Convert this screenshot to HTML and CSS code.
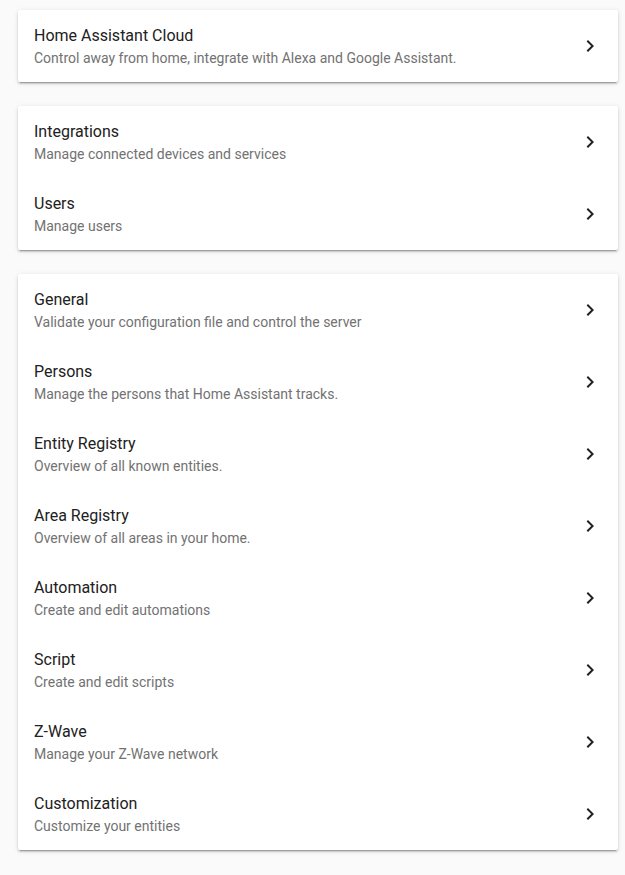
FILE: index.html
```html
<!DOCTYPE html>
<html lang="en">
<head>
<meta charset="utf-8">
<title>Configuration</title>
<link rel="stylesheet" href="styles.css">
</head>
<body>
<main class="page">
  <section class="card">
    <div class="item">
      <div class="body"><div class="title">Home Assistant Cloud</div><div class="sub">Control away from home, integrate with Alexa and Google Assistant.</div></div>
      <svg class="chev" viewBox="0 0 24 24"><path d="M8.59,16.58L13.17,12L8.59,7.41L10,6L16,12L10,18L8.59,16.58Z"/></svg>
    </div>
  </section>
  <section class="card">
    <div class="item">
      <div class="body"><div class="title">Integrations</div><div class="sub">Manage connected devices and services</div></div>
      <svg class="chev" viewBox="0 0 24 24"><path d="M8.59,16.58L13.17,12L8.59,7.41L10,6L16,12L10,18L8.59,16.58Z"/></svg>
    </div>
    <div class="item">
      <div class="body"><div class="title">Users</div><div class="sub">Manage users</div></div>
      <svg class="chev" viewBox="0 0 24 24"><path d="M8.59,16.58L13.17,12L8.59,7.41L10,6L16,12L10,18L8.59,16.58Z"/></svg>
    </div>
  </section>
  <section class="card">
    <div class="item">
      <div class="body"><div class="title">General</div><div class="sub">Validate your configuration file and control the server</div></div>
      <svg class="chev" viewBox="0 0 24 24"><path d="M8.59,16.58L13.17,12L8.59,7.41L10,6L16,12L10,18L8.59,16.58Z"/></svg>
    </div>
    <div class="item">
      <div class="body"><div class="title">Persons</div><div class="sub">Manage the persons that Home Assistant tracks.</div></div>
      <svg class="chev" viewBox="0 0 24 24"><path d="M8.59,16.58L13.17,12L8.59,7.41L10,6L16,12L10,18L8.59,16.58Z"/></svg>
    </div>
    <div class="item">
      <div class="body"><div class="title">Entity Registry</div><div class="sub">Overview of all known entities.</div></div>
      <svg class="chev" viewBox="0 0 24 24"><path d="M8.59,16.58L13.17,12L8.59,7.41L10,6L16,12L10,18L8.59,16.58Z"/></svg>
    </div>
    <div class="item">
      <div class="body"><div class="title">Area Registry</div><div class="sub">Overview of all areas in your home.</div></div>
      <svg class="chev" viewBox="0 0 24 24"><path d="M8.59,16.58L13.17,12L8.59,7.41L10,6L16,12L10,18L8.59,16.58Z"/></svg>
    </div>
    <div class="item">
      <div class="body"><div class="title">Automation</div><div class="sub">Create and edit automations</div></div>
      <svg class="chev" viewBox="0 0 24 24"><path d="M8.59,16.58L13.17,12L8.59,7.41L10,6L16,12L10,18L8.59,16.58Z"/></svg>
    </div>
    <div class="item">
      <div class="body"><div class="title">Script</div><div class="sub">Create and edit scripts</div></div>
      <svg class="chev" viewBox="0 0 24 24"><path d="M8.59,16.58L13.17,12L8.59,7.41L10,6L16,12L10,18L8.59,16.58Z"/></svg>
    </div>
    <div class="item">
      <div class="body"><div class="title">Z-Wave</div><div class="sub">Manage your Z-Wave network</div></div>
      <svg class="chev" viewBox="0 0 24 24"><path d="M8.59,16.58L13.17,12L8.59,7.41L10,6L16,12L10,18L8.59,16.58Z"/></svg>
    </div>
    <div class="item">
      <div class="body"><div class="title">Customization</div><div class="sub">Customize your entities</div></div>
      <svg class="chev" viewBox="0 0 24 24"><path d="M8.59,16.58L13.17,12L8.59,7.41L10,6L16,12L10,18L8.59,16.58Z"/></svg>
    </div>
  </section>
</main>
</body>
</html>
```

FILE: styles.css
```css
html, body {
  margin: 0;
  padding: 0;
  background: #fafafa;
  font-family: Roboto, "Noto Sans", sans-serif;
  -webkit-font-smoothing: antialiased;
}
.page {
  display: flex;
  flex-direction: column;
  gap: 24px;
  padding: 10px 7px 24px 18px;
}
.card {
  width: 600px;
  background: #fff;
  border-radius: 2px;
  box-shadow: 0 2px 2px 0 rgba(0,0,0,.14), 0 1px 5px 0 rgba(0,0,0,.12), 0 3px 1px -2px rgba(0,0,0,.2);
}
.item {
  display: flex;
  align-items: center;
  height: 72px;
  padding: 0 16px;
  box-sizing: border-box;
}
.body {
  flex: 1;
  display: flex;
  flex-direction: column;
}
.title {
  font-size: 16px;
  line-height: 24px;
  color: #212121;
}
.sub {
  font-size: 14px;
  line-height: 20px;
  color: #727272;
}
.chev {
  width: 24px;
  height: 24px;
  fill: #212121;
  flex: none;
}
```
